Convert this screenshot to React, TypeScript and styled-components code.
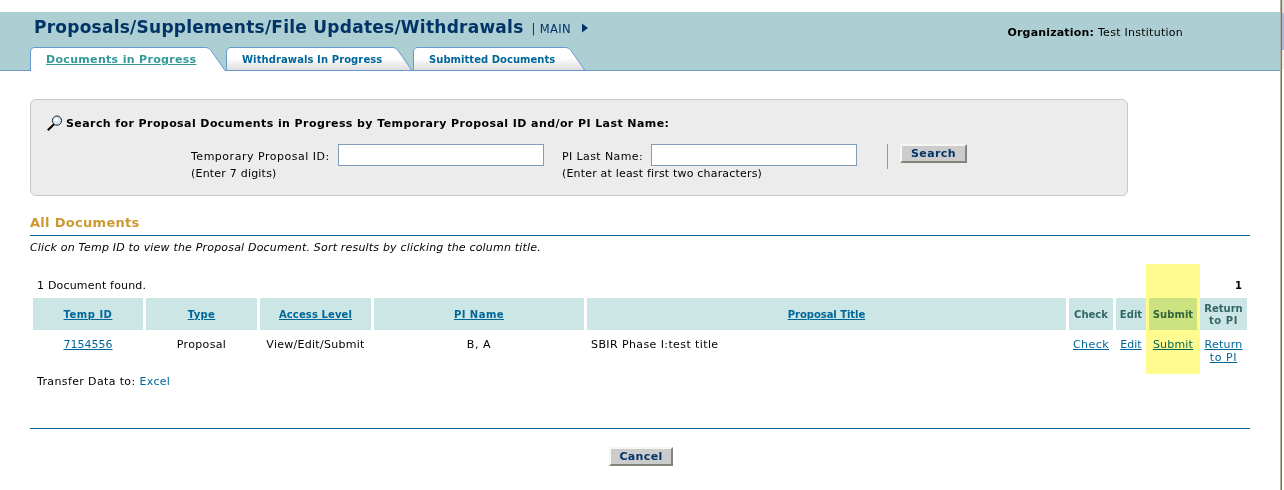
import React from "react";
import styled, { createGlobalStyle } from "styled-components";

const Global = createGlobalStyle`
  * { box-sizing: border-box; }
  html, body { margin: 0; padding: 0; background: #fff; }
  body { font: 11px/13px "DejaVu Sans", Verdana, sans-serif; color: #000; overflow: hidden; }
`;

const T = styled.span<{ $ls?: number }>`
  white-space: nowrap;
  letter-spacing: ${(p) => p.$ls ?? 0.3}px;
`;

const Window = styled.div`
  display: grid;
  grid-template-columns: 1280px 1px 1px 2px;
  width: 1284px;
  height: 490px;
`;
const Edge = styled.div<{ $c: string }>`
  background: ${(p) => p.$c};
`;
const Scroll = styled.div`
  display: grid;
  grid-template-rows: 13px 37px 19px 1fr;
`;
const Page = styled.div`
  display: flex;
  flex-direction: column;
  padding-top: 12px;
`;
const Header = styled.header`
  display: flex;
  flex-direction: column;
  justify-content: space-between;
  height: 59px;
  background: linear-gradient(#6699cc, #6699cc) bottom / 100% 1px no-repeat #adced2;
`;
const HeaderTop = styled.div`
  display: flex;
  justify-content: space-between;
  padding: 5px 97px 0 34px;
`;
const TitleRow = styled.div`
  display: flex;
  align-items: baseline;
  color: #003366;
`;
const Title = styled.h1`
  margin: 0;
  font-size: 17px;
  line-height: 20px;
  font-weight: bold;
  letter-spacing: 0.245px;
  white-space: nowrap;
`;
const Main = styled(T)`
  margin-left: 8px;
  font-size: 11.5px;
`;
const Arrow = styled.svg`
  margin-left: 11px;
  align-self: center;
`;
const Org = styled.div`
  display: flex;
  gap: 4px;
  padding-top: 9px;
`;
const Tabs = styled.nav`
  display: flex;
  padding-left: 30px;
`;
const TabBox = styled.a<{ $w: number }>`
  display: grid;
  width: ${(p) => p.$w}px;
  height: 24px;
  color: #006699;
  font-size: 10px;
  font-weight: bold;
  > * { grid-area: 1 / 1; }
`;
const TabLabel = styled(T)<{ $active?: boolean }>`
  padding: 6px 0 0 16px;
  z-index: 1;
  ${(p) => p.$active && "color: #339999; font-size: 11px; text-decoration: underline;"}
`;
const Body = styled.main`
  display: flex;
  flex-direction: column;
  padding: 28px 30px 0;
`;
const Panel = styled.section`
  width: 1098px;
  height: 97px;
  border: 1px solid #c8c8c8;
  border-radius: 6px;
  background: #ececec;
  padding: 15px 16px 0;
`;
const PanelTitle = styled.div`
  display: flex;
  align-items: center;
  gap: 3px;
  height: 17px;
  font-weight: bold;
`;
const Form = styled.div`
  display: flex;
  align-items: flex-start;
  margin: 12px 0 0 144px;
`;
const Labels = styled.div<{ $w: number; $indent?: number }>`
  display: flex;
  flex-direction: column;
  gap: 4px;
  width: ${(p) => p.$w}px;
  padding: 6px 0 0 ${(p) => p.$indent ?? 0}px;
`;
const Field = styled.input`
  width: 206px;
  height: 22px;
  border: 1px solid #7f9db9;
  background: #fff;
  padding: 0 4px;
  margin: 0;
`;
const Divider = styled.div`
  width: 1px;
  height: 25px;
  margin: 0 12px 0 30px;
  background: #999;
`;
const Button = styled.button<{ $w: number }>`
  width: ${(p) => p.$w}px;
  height: 19px;
  padding: 0;
  border: 2px solid;
  border-color: #f7f7f2 #84847a #84847a #f7f7f2;
  background: #ccc;
  color: #003366;
  font: bold 11px/14px "DejaVu Sans", Verdana, sans-serif;
`;
const Heading = styled.h2`
  margin: 19px 0 0;
  height: 21px;
  border-bottom: 1px solid #006699;
  color: #cc9933;
  font-size: 13px;
  line-height: 16px;
  letter-spacing: 0.3px;
`;
const Hint = styled.p`
  margin: 5px 0 0 0;
  font-style: italic;
`;
const Summary = styled.div`
  display: flex;
  justify-content: space-between;
  padding: 25px 8px 0 7px;
`;
const PageNumber = styled.b`
  font-size: 10px;
`;
const Table = styled.div`
  position: relative;
  display: grid;
  grid-template-columns: 110px 111px 111px 210px 479px 44px 30px 48px 47px;
  column-gap: 3px;
  margin: 6px 0 0 3px;
`;
const HeadCell = styled.div<{ $link?: boolean }>`
  display: flex;
  flex-direction: column;
  align-items: center;
  justify-content: center;
  height: 32px;
  padding-top: 2px;
  background: #cce6e6;
  color: ${(p) => (p.$link ? "#006699" : "#336666")};
  text-decoration: ${(p) => (p.$link ? "underline" : "none")};
  font-size: 10px;
  line-height: 12px;
  font-weight: bold;
`;
const Cell = styled.div<{ $link?: boolean; $left?: boolean }>`
  display: flex;
  flex-direction: column;
  align-items: ${(p) => (p.$left ? "flex-start" : "center")};
  padding: 8px 0 0 ${(p) => (p.$left ? 4 : 0)}px;
  color: ${(p) => (p.$link ? "#006699" : "#000")};
  text-decoration: ${(p) => (p.$link ? "underline" : "none")};
`;
const Highlight = styled.div`
  position: absolute;
  left: 1113px;
  top: -34px;
  width: 54px;
  height: 110px;
  background: #fffb8f;
  mix-blend-mode: multiply;
`;
const Transfer = styled.div`
  display: flex;
  gap: 4px;
  margin: 11px 0 0 7px;
`;
const Excel = styled(T)`
  color: #006699;
`;
const Footer = styled.footer`
  display: flex;
  justify-content: center;
  margin-top: 40px;
  padding: 18px 0 0 2px;
  border-top: 1px solid #006699;
`;

type Txt = [string, number];

const TABS: { text: string; ls: number; w: number; active?: boolean }[] = [
  { text: "Documents in Progress", ls: 0.32, w: 196, active: true },
  { text: "Withdrawals In Progress", ls: 0.09, w: 187 },
  { text: "Submitted Documents", ls: 0.04, w: 173 },
];

const HEADS: { lines: Txt[]; link?: boolean }[] = [
  { lines: [["Temp ID", 0.5]], link: true },
  { lines: [["Type", 0.35]], link: true },
  { lines: [["Access Level", 0.12]], link: true },
  { lines: [["PI Name", 0.48]], link: true },
  { lines: [["Proposal Title", -0.04]], link: true },
  { lines: [["Check", 0]] },
  { lines: [["Edit", 0.05]] },
  { lines: [["Submit", 0.05]] },
  { lines: [["Return", 0], ["to PI", 0.6]] },
];

const ROW: { lines: Txt[]; link?: boolean; left?: boolean }[] = [
  { lines: [["7154556", 0]], link: true },
  { lines: [["Proposal", 0.36]] },
  { lines: [["View/Edit/Submit", 0.28]] },
  { lines: [["B, A", 0.6]] },
  { lines: [["SBIR Phase I:test title", 0.4]], left: true },
  { lines: [["Check", 0.45]], link: true },
  { lines: [["Edit", 0.05]], link: true },
  { lines: [["Submit", 0.2]], link: true },
  { lines: [["Return", 0.25], ["to PI", 0.6]], link: true },
];

function Tab({ text, ls, w, active }: (typeof TABS)[number]) {
  const shape = `M0.5 24V5Q0.5 0.5 5 0.5H${w - 20}Q${w - 17} 0.5 ${w - 15} 3.5L${w - 1} 23.5`;
  return (
    <TabBox $w={w}>
      <svg width={w} height="24">
        <defs>
          <linearGradient id="tabFill" x1="0" y1="0" x2="0" y2="1">
            <stop offset="0.45" stopColor="#fff" />
            <stop offset="1" stopColor="#dcdcdc" />
          </linearGradient>
        </defs>
        <path d={`${shape}V24Z`} fill={active ? "#fff" : "url(#tabFill)"} />
        <path d={shape} fill="none" stroke="#6699cc" />
        {!active && <path d={`M0 23.5H${w}`} stroke="#6699cc" />}
      </svg>
      <TabLabel $ls={ls} $active={active}>{text}</TabLabel>
    </TabBox>
  );
}

function Magnifier() {
  return (
    <svg width="16" height="17" viewBox="0 0 16 17">
      <path d="M0.8 15.2L7 9.2" stroke="#000" strokeWidth="2.1" />
      <circle cx="10" cy="5.6" r="4.6" fill="#cfe6f2" stroke="#222" strokeWidth="1" />
      <circle cx="9" cy="4.8" r="2.3" fill="#f4fafd" />
    </svg>
  );
}

export default function App() {
  return (
    <Window>
      <Global />
      <Page>
        <Header>
          <HeaderTop>
            <TitleRow>
              <Title>Proposals/Supplements/File Updates/Withdrawals</Title>
              <Main $ls={0.35}>| MAIN</Main>
              <Arrow width="6" height="10"><path d="M0 0.5L6 5L0 9.5Z" fill="#003366" /></Arrow>
            </TitleRow>
            <Org>
              <T as="b" $ls={0.17}>Organization:</T>
              <T $ls={0.26}>Test Institution</T>
            </Org>
          </HeaderTop>
          <Tabs>{TABS.map((t) => <Tab key={t.text} {...t} />)}</Tabs>
        </Header>
        <Body>
          <Panel>
            <PanelTitle>
              <Magnifier />
              <T $ls={0.415}>Search for Proposal Documents in Progress by Temporary Proposal ID and/or PI Last Name:</T>
            </PanelTitle>
            <Form>
              <Labels $w={147}>
                <T $ls={0.51}>Temporary Proposal ID:</T>
                <T $ls={0.21}>(Enter 7 digits)</T>
              </Labels>
              <Field />
              <Labels $w={107} $indent={18}>
                <T $ls={0.4}>PI Last Name:</T>
                <T $ls={0.186}>(Enter at least first two characters)</T>
              </Labels>
              <Field />
              <Divider />
              <Button $w={67}><T $ls={0.44}>Search</T></Button>
            </Form>
          </Panel>
          <Heading>All Documents</Heading>
          <Hint><T $ls={0.185}>Click on Temp ID to view the Proposal Document. Sort results by clicking the column title.</T></Hint>
          <Summary>
            <T $ls={0.19}>1 Document found.</T>
            <PageNumber>1</PageNumber>
          </Summary>
          <Table>
            {HEADS.map((h, i) => (
              <HeadCell key={i} $link={h.link}>
                {h.lines.map(([t, ls]) => <T key={t} $ls={ls}>{t}</T>)}
              </HeadCell>
            ))}
            {ROW.map((c, i) => (
              <Cell key={i} $link={c.link} $left={c.left}>
                {c.lines.map(([t, ls]) => <T key={t} $ls={ls}>{t}</T>)}
              </Cell>
            ))}
            <Highlight />
          </Table>
          <Transfer>
            <T $ls={0.37}>Transfer Data to:</T>
            <Excel $ls={0.3}>Excel</Excel>
          </Transfer>
          <Footer><Button $w={64}><T $ls={0.35}>Cancel</T></Button></Footer>
        </Body>
      </Page>
      <Edge $c="#b5ad9c" />
      <Edge $c="#7b7566" />
      <Scroll>
        <Edge $c="#dedede" />
        <Edge $c="#a9b8e6" />
        <Edge $c="#eeeeee" />
        <Edge $c="#fff" />
      </Scroll>
    </Window>
  );
}
